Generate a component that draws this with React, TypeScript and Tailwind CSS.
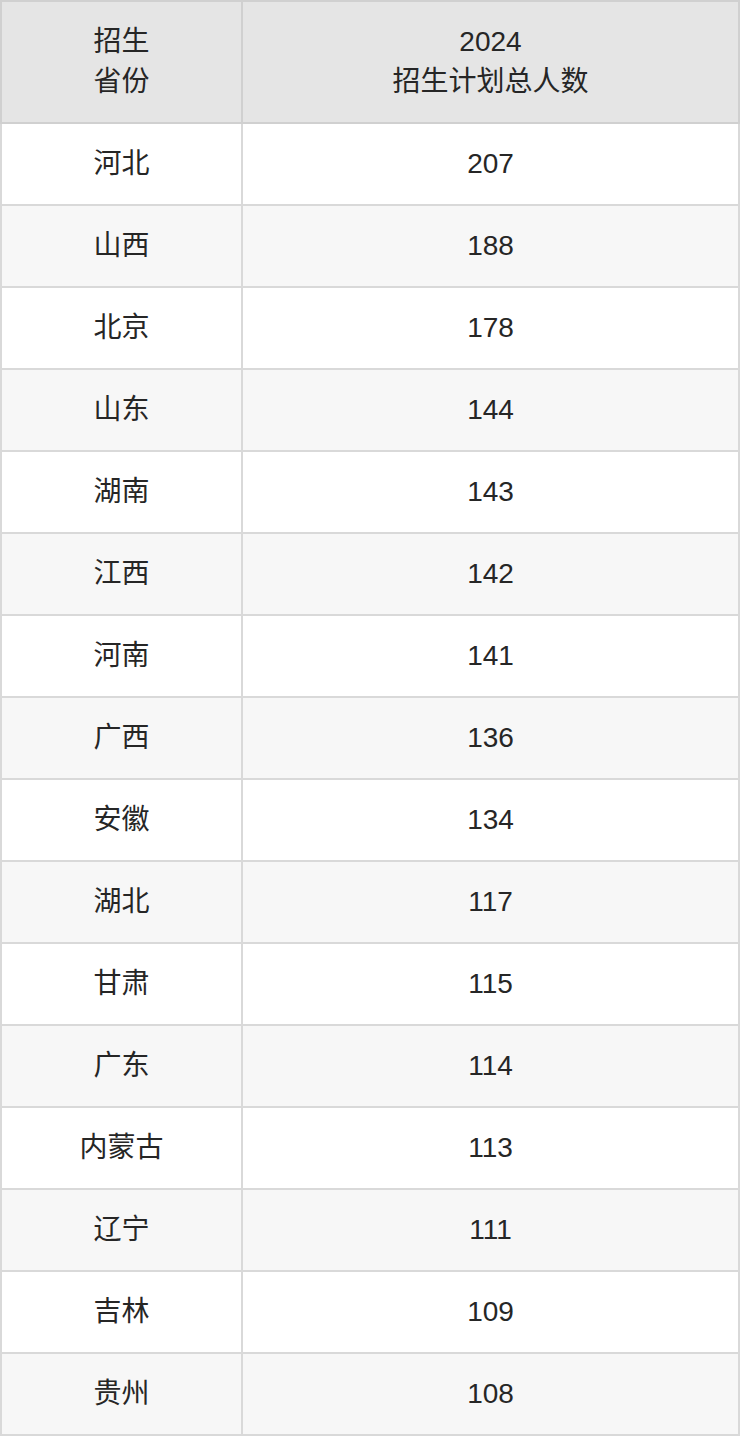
const rows: [string, number][] = [
  ["河北", 207],
  ["山西", 188],
  ["北京", 178],
  ["山东", 144],
  ["湖南", 143],
  ["江西", 142],
  ["河南", 141],
  ["广西", 136],
  ["安徽", 134],
  ["湖北", 117],
  ["甘肃", 115],
  ["广东", 114],
  ["内蒙古", 113],
  ["辽宁", 111],
  ["吉林", 109],
  ["贵州", 108],
];

export default function App() {
  return (
    <div className="w-[740px] bg-white font-['Liberation_Sans','Noto_Sans_CJK_SC',sans-serif] text-[28px] leading-[40px] text-[#262626]">
      <table className="w-[740px] table-fixed border-collapse">
        <colgroup>
          <col className="w-[241px]" />
          <col />
        </colgroup>
        <thead>
          <tr className="bg-[#e5e5e5]">
            <th className="border-2 border-[#d0d0d0] py-[20px] text-center font-normal">
              招生
              <br />
              省份
            </th>
            <th className="border-2 border-[#d0d0d0] py-[20px] text-center font-normal">
              2024
              <br />
              招生计划总人数
            </th>
          </tr>
        </thead>
        <tbody>
          {rows.map(([name, n], i) => (
            <tr key={name} className={i % 2 === 0 ? "bg-white" : "bg-[#f7f7f7]"}>
              <td className="border-2 border-[#d9d9d9] py-[20px] text-center">{name}</td>
              <td className="border-2 border-[#d9d9d9] py-[20px] text-center">{n}</td>
            </tr>
          ))}
        </tbody>
      </table>
    </div>
  );
}
